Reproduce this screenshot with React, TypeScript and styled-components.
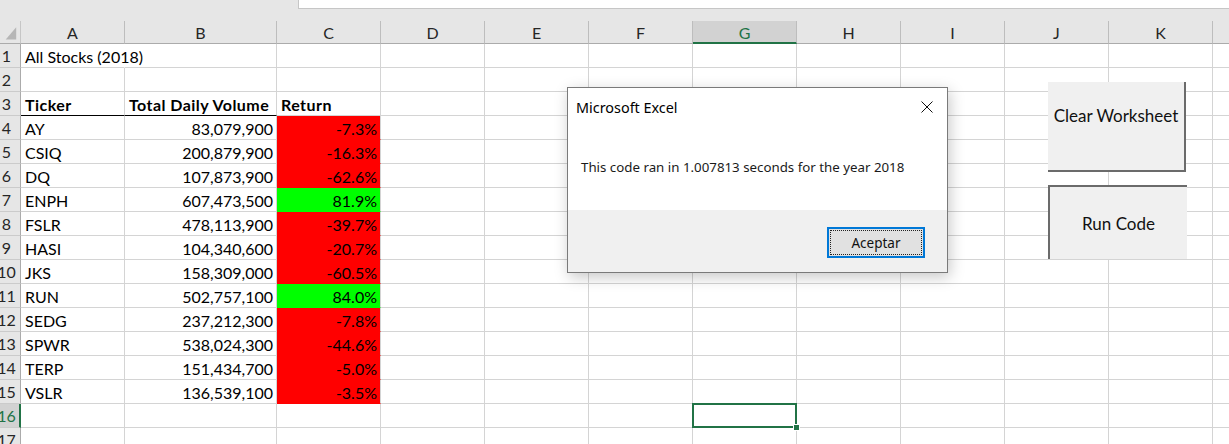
import React from 'react';
import styled, { createGlobalStyle } from 'styled-components';

const GlobalStyle = createGlobalStyle`
  html, body {
    margin: 0;
    padding: 0;
    background: #fff;
    overflow: hidden;
  }
`;

const COLUMNS = ['A', 'B', 'C', 'D', 'E', 'F', 'G', 'H', 'I', 'J', 'K', 'L'];
const ACTIVE_COL = 'G';
const ACTIVE_ROW = 16;
const ROW_COUNT = 17;

const stocks = [
  { ticker: 'AY', volume: '83,079,900', ret: '-7.3%' },
  { ticker: 'CSIQ', volume: '200,879,900', ret: '-16.3%' },
  { ticker: 'DQ', volume: '107,873,900', ret: '-62.6%' },
  { ticker: 'ENPH', volume: '607,473,500', ret: '81.9%' },
  { ticker: 'FSLR', volume: '478,113,900', ret: '-39.7%' },
  { ticker: 'HASI', volume: '104,340,600', ret: '-20.7%' },
  { ticker: 'JKS', volume: '158,309,000', ret: '-60.5%' },
  { ticker: 'RUN', volume: '502,757,100', ret: '84.0%' },
  { ticker: 'SEDG', volume: '237,212,300', ret: '-7.8%' },
  { ticker: 'SPWR', volume: '538,024,300', ret: '-44.6%' },
  { ticker: 'TERP', volume: '151,434,700', ret: '-5.0%' },
  { ticker: 'VSLR', volume: '136,539,100', ret: '-3.5%' },
];

interface CellData {
  text?: string;
  align?: 'left' | 'right';
  bold?: boolean;
  fill?: string;
  rule?: boolean;
  spill?: boolean;
}

// builds the content of one sheet row, keyed by column letter
function rowCells(row: number): Record<string, CellData> {
  if (row === 1) return { A: { text: 'All Stocks (2018)', spill: true } };
  if (row === 3)
    return {
      A: { text: 'Ticker', bold: true, rule: true },
      B: { text: 'Total Daily Volume', bold: true, rule: true },
      C: { text: 'Return', bold: true },
    };
  const s = stocks[row - 4];
  if (!s) return {};
  const up = !s.ret.startsWith('-');
  return {
    A: { text: s.ticker },
    B: { text: s.volume, align: 'right' },
    C: { text: s.ret, align: 'right', fill: up ? '#00ff00' : '#ff0000' },
  };
}

export default function App() {
  const rows = Array.from({ length: ROW_COUNT }, (_, i) => i + 1);

  return (
    <Sheet>
      <GlobalStyle />
      <TopStrip>
        <FormulaBox />
      </TopStrip>
      <Grid>
        <Corner>
          <svg width="21" height="22" viewBox="0 0 21 22">
            <polygon points="17,6 17,19 6,19" fill="#b6b6b6" />
          </svg>
        </Corner>
        {COLUMNS.map((c) => (
          <ColHead key={c} $active={c === ACTIVE_COL}>{c}</ColHead>
        ))}
        {rows.map((r) => {
          const cells = rowCells(r);
          return (
            <React.Fragment key={r}>
              <RowHead $active={r === ACTIVE_ROW}>{r}</RowHead>
              {COLUMNS.map((c) => {
                const d = cells[c] || {};
                const selected = r === ACTIVE_ROW && c === ACTIVE_COL;
                return (
                  <Cell
                    key={c}
                    $align={d.align}
                    $bold={d.bold}
                    $fill={d.fill}
                    $rule={d.rule}
                    $spill={d.spill}
                    $selected={selected}
                  >
                    {d.text}
                  </Cell>
                );
              })}
            </React.Fragment>
          );
        })}
      </Grid>

      <FormButton style={{ left: 1048, top: 82, width: 138, height: 90 }} $pressed={false}>
        Clear Worksheet
      </FormButton>
      <FormButton style={{ left: 1048, top: 185, width: 139, height: 74 }} $pressed>
        Run Code
      </FormButton>

      <Dialog>
        <TitleBar>
          <Title>Microsoft Excel</Title>
          <CloseButton>
            <svg width="12" height="12" viewBox="0 0 12 12">
              <path d="M0.5 0.5 L11.5 11.5 M11.5 0.5 L0.5 11.5" stroke="#111" strokeWidth="1" fill="none" />
            </svg>
          </CloseButton>
        </TitleBar>
        <Message>This code ran in 1.007813 seconds for the year 2018</Message>
        <Footer>
          <OkButton>
            <FocusRing>Aceptar</FocusRing>
          </OkButton>
        </Footer>
      </Dialog>
    </Sheet>
  );
}

const Sheet = styled.div`
  position: relative;
  width: 1229px;
  height: 444px;
  overflow: hidden;
  background: #fff;
  font-family: Lato, 'Liberation Sans', sans-serif;
  color: #000;
`;

const TopStrip = styled.div`
  height: 21px;
  background: #e6e6e6;
  display: flex;
`;

const FormulaBox = styled.div`
  margin-left: 298px;
  flex: 1;
  height: 9px;
  box-sizing: border-box;
  background: #fff;
  border-left: 1px solid #c6c6c6;
  border-bottom: 1px solid #c6c6c6;
`;

const Grid = styled.div`
  display: grid;
  grid-template-columns: 21px 104px 152px repeat(10, 104px);
  grid-template-rows: 23px;
  grid-auto-rows: 24px;
`;

const Corner = styled.div`
  background: #e6e6e6;
  border-bottom: 1px solid #ababab;
  border-right: 1px solid #c6c6c6;
  box-sizing: border-box;
  display: flex;
  align-items: flex-end;
  overflow: hidden;

  svg {
    display: block;
  }
`;

const ColHead = styled.div<{ $active: boolean }>`
  box-sizing: border-box;
  background: ${(p) => (p.$active ? '#d2d2d2' : '#e6e6e6')};
  color: ${(p) => (p.$active ? '#217346' : '#262626')};
  border-right: 1px solid #bdbdbd;
  border-bottom: ${(p) => (p.$active ? '2px solid #217346' : '1px solid #ababab')};
  display: flex;
  align-items: center;
  justify-content: center;
  font-size: 16px;
  overflow: hidden;
  padding-top: ${(p) => (p.$active ? '1px' : '0')};
`;

const RowHead = styled.div<{ $active: boolean }>`
  box-sizing: border-box;
  background: ${(p) => (p.$active ? '#d2d2d2' : '#e6e6e6')};
  color: ${(p) => (p.$active ? '#217346' : '#262626')};
  border-bottom: 1px solid #cbcbcb;
  border-right: ${(p) => (p.$active ? '2px solid #217346' : '1px solid #ababab')};
  display: flex;
  align-items: center;
  justify-content: center;
  padding-right: ${(p) => (p.$active ? '6px' : '7px')};
  font-size: 16px;
  overflow: hidden;
  white-space: nowrap;
`;

const Cell = styled.div<{
  $align?: 'left' | 'right';
  $bold?: boolean;
  $fill?: string;
  $rule?: boolean;
  $spill?: boolean;
  $selected?: boolean;
}>`
  position: relative;
  box-sizing: border-box;
  background: ${(p) => p.$fill || 'transparent'};
  border-right: 1px solid ${(p) => (p.$spill ? 'transparent' : '#d4d4d4')};
  border-bottom: 1px solid ${(p) => (p.$rule ? '#000' : p.$fill || '#d4d4d4')};
  display: flex;
  align-items: center;
  justify-content: ${(p) => (p.$align === 'right' ? 'flex-end' : 'flex-start')};
  padding: 1px 3px 0 4px;
  font-size: 16px;
  font-weight: ${(p) => (p.$bold ? 700 : 400)};
  letter-spacing: ${(p) => (p.$bold ? '0.45px' : '0')};
  white-space: nowrap;
  overflow: visible;
  z-index: ${(p) => (p.$selected ? 2 : 'auto')};

  ${(p) =>
    p.$selected &&
    `
    &::before {
      content: '';
      position: absolute;
      left: -1px;
      top: -1px;
      right: -1px;
      bottom: -1px;
      border: 2px solid #217346;
    }
    &::after {
      content: '';
      position: absolute;
      right: -4px;
      bottom: -4px;
      width: 5px;
      height: 5px;
      background: #217346;
      border: 1px solid #fff;
    }
  `}
`;

const FormButton = styled.div<{ $pressed: boolean }>`
  position: absolute;
  box-sizing: border-box;
  background: #f0f0f0;
  display: flex;
  justify-content: center;
  align-items: ${(p) => (p.$pressed ? 'center' : 'flex-start')};
  padding-top: ${(p) => (p.$pressed ? '0' : '23px')};
  font-size: 17px;
  color: #111;
  white-space: nowrap;
  ${(p) =>
    p.$pressed
      ? `border-top: 2px solid #6b6b6b; border-left: 2px solid #6b6b6b;`
      : `border-right: 2px solid #6b6b6b; border-bottom: 2px solid #6b6b6b;`}
`;

const Dialog = styled.div`
  position: absolute;
  left: 567px;
  top: 87px;
  width: 381px;
  height: 186px;
  box-sizing: border-box;
  border: 1px solid #7a7a7a;
  background: #fff;
  box-shadow: 2px 4px 14px rgba(0, 0, 0, 0.22);
  display: flex;
  flex-direction: column;
  font-family: 'Noto Sans', 'Open Sans', sans-serif;
  color: #000;
`;

const TitleBar = styled.div`
  height: 38px;
  display: flex;
  align-items: center;
  justify-content: space-between;
  padding-left: 8px;
`;

const Title = styled.span`
  font-size: 14.4px;
`;

const CloseButton = styled.div`
  width: 40px;
  height: 38px;
  display: flex;
  align-items: center;
  justify-content: center;

  svg {
    display: block;
  }
`;

const Message = styled.div`
  flex: 1;
  display: flex;
  align-items: center;
  padding-left: 13px;
  padding-bottom: 2px;
  font-size: 13.3px;
  color: #1a1a1a;
`;

const Footer = styled.div`
  height: 62px;
  background: #f0f0f0;
  display: flex;
  justify-content: flex-end;
  align-items: flex-start;
  padding: 17px 22px 0 0;
  box-sizing: border-box;
`;

const OkButton = styled.div`
  width: 98px;
  height: 31px;
  box-sizing: border-box;
  border: 2px solid #0078d7;
  background: #e1e1e1;
  display: flex;
  padding: 1px;
`;

const FocusRing = styled.div`
  flex: 1;
  border: 1px dotted #222;
  display: flex;
  align-items: center;
  justify-content: center;
  font-size: 13.5px;
  color: #111;
`;
